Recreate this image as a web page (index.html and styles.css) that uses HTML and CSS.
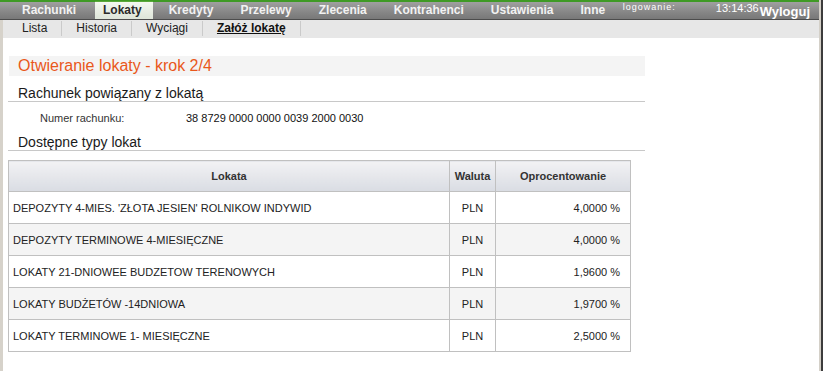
FILE: index.html
```html
<!DOCTYPE html>
<html lang="pl">
<head>
  <meta charset="UTF-8">
  <title>Otwieranie lokaty - krok 2/4</title>
  <link rel="stylesheet" href="styles.css">
</head>
<body>
<div class="window">
  <div class="main">
    <div class="topbar">
      <ul class="menu">
        <li>Rachunki</li>
        <li class="active">Lokaty</li>
        <li>Kredyty</li>
        <li>Przelewy</li>
        <li>Zlecenia</li>
        <li>Kontrahenci</li>
        <li>Ustawienia</li>
        <li>Inne</li>
      </ul>
      <div class="session">
        <span class="login-label">logowanie:</span>
        <span class="clock">13:14:36</span>
        <a class="logout">Wyloguj</a>
      </div>
    </div>
    <div class="page">
      <ul class="submenu">
        <li>Lista</li>
        <li>Historia</li>
        <li>Wyciągi</li>
        <li class="current">Załóż lokatę</li>
      </ul>
      <div class="content">
        <div class="title-box">Otwieranie lokaty - krok 2/4</div>

        <h2 class="section">Rachunek powiązany z lokatą</h2>
        <div class="field">
          <span class="field-label">Numer rachunku:</span>
          <span class="field-value">38 8729 0000 0000 0039 2000 0030</span>
        </div>

        <h2 class="section">Dostępne typy lokat</h2>
        <table class="deposits">
          <colgroup>
            <col class="c-name">
            <col class="c-cur">
            <col class="c-rate">
          </colgroup>
          <thead>
            <tr><th>Lokata</th><th>Waluta</th><th>Oprocentowanie</th></tr>
          </thead>
          <tbody>
            <tr><td>DEPOZYTY 4-MIES. 'ZŁOTA JESIEN' ROLNIKOW INDYWID</td><td class="cur">PLN</td><td class="rate">4,0000 %</td></tr>
            <tr><td>DEPOZYTY TERMINOWE 4-MIESIĘCZNE</td><td class="cur">PLN</td><td class="rate">4,0000 %</td></tr>
            <tr><td>LOKATY 21-DNIOWEE BUDZETOW TERENOWYCH</td><td class="cur">PLN</td><td class="rate">1,9600 %</td></tr>
            <tr><td>LOKATY BUDŻETÓW -14DNIOWA</td><td class="cur">PLN</td><td class="rate">1,9700 %</td></tr>
            <tr><td>LOKATY TERMINOWE 1- MIESIĘCZNE</td><td class="cur">PLN</td><td class="rate">2,5000 %</td></tr>
          </tbody>
        </table>
      </div>
    </div>
  </div>
</div>
</body>
</html>
```

FILE: styles.css
```css
html, body {
  margin: 0;
  padding: 0;
  height: 100%;
}
body {
  font-family: "Liberation Sans", Arial, sans-serif;
  background-color: #fff;
  color: #222;
}
.window {
  min-height: 100%;
  border-right: 2px solid #3c3c3c;
  box-sizing: border-box;
}
.main {
  min-height: 100vh;
  border-right: 2px solid #d4d0c8;
}

/* top menu */
.topbar {
  display: flex;
  align-items: stretch;
  height: 17px;
  border-top: 2px solid #3f9a25;
  border-bottom: 1px solid #4c4c4c;
  background: linear-gradient(#a0a0a0, #868686 60%, #787878);
}
.menu {
  display: flex;
  list-style: none;
  margin: 0;
  padding: 0 0 0 14px;
  gap: 8px;
}
.menu li {
  padding: 0 11px 0 8px;
  font-size: 12px;
  font-weight: bold;
  line-height: 17px;
  color: #f2f2f2;
}
.menu li.active {
  margin-top: -1px;
  color: #2b2b2b;
  background: linear-gradient(#f4f8f0, #dfe6da);
  border-top: 1px solid #5aa83a;
  border-bottom: 1px solid #dfe6da;
}
.session {
  display: flex;
  align-items: flex-start;
  margin-left: auto;
  padding-right: 9px;
  color: #fff;
}
.login-label {
  font-size: 9px;
  letter-spacing: 1px;
  line-height: 11px;
  margin-right: 40px;
}
.clock {
  font-size: 11px;
  line-height: 12px;
}
.logout {
  font-size: 13px;
  font-weight: bold;
  line-height: 19px;
  margin-left: 1px;
}

/* page frame */
.page {
  border-left: 3px solid #d6d2ca;
  min-height: calc(100vh - 20px);
}
.submenu {
  display: flex;
  list-style: none;
  margin: 0;
  padding: 0 0 0 5px;
  height: 18px;
  background-color: #e7e7e7;
}
.submenu li {
  padding: 0 14px;
  font-size: 12px;
  color: #222;
  border-right: 1px solid #cacaca;
  margin: 1px 0 2px;
  line-height: 15px;
}
.submenu li.current {
  font-weight: bold;
  text-decoration: underline;
  color: #111;
}

/* content */
.content {
  padding: 18px 0 0 5px;
  width: 637px;
}
.title-box {
  margin-left: 1px;
  height: 20px;
  padding-left: 9px;
  background-color: #f4f4f4;
  color: #e9581b;
  font-size: 16px;
  line-height: 20px;
}
.section {
  margin: 9px 0 0;
  padding-left: 10px;
  font-size: 14px;
  font-weight: normal;
  line-height: 16px;
  color: #1a1a1a;
  border-bottom: 1px solid #c8c8c8;
}
.field {
  display: flex;
  margin-top: 10px;
  font-size: 11px;
  line-height: 13px;
}
.field-label {
  width: 146px;
  padding-left: 32px;
  color: #333;
}
.field-value {
  color: #111;
}

/* deposits table */
.deposits {
  margin-top: 9px;
  width: 623px;
  border-collapse: collapse;
  font-size: 11px;
}
.c-name { width: 441px; }
.c-cur { width: 46px; }
.deposits th {
  height: 30px;
  padding: 0;
  font-weight: bold;
  color: #333;
  background: linear-gradient(#f2f2f4, #d9dce3);
  border: 1px solid #c0c0c0;
}
.deposits td {
  height: 31px;
  padding: 0 0 0 4px;
  color: #222;
  border: 1px solid #c0c0c0;
}
.deposits tbody tr:nth-child(even) td {
  background-color: #f4f4f4;
}
.deposits td.cur {
  padding: 0;
  text-align: center;
}
.deposits td.rate {
  padding: 0 10px 0 0;
  text-align: right;
}
```
